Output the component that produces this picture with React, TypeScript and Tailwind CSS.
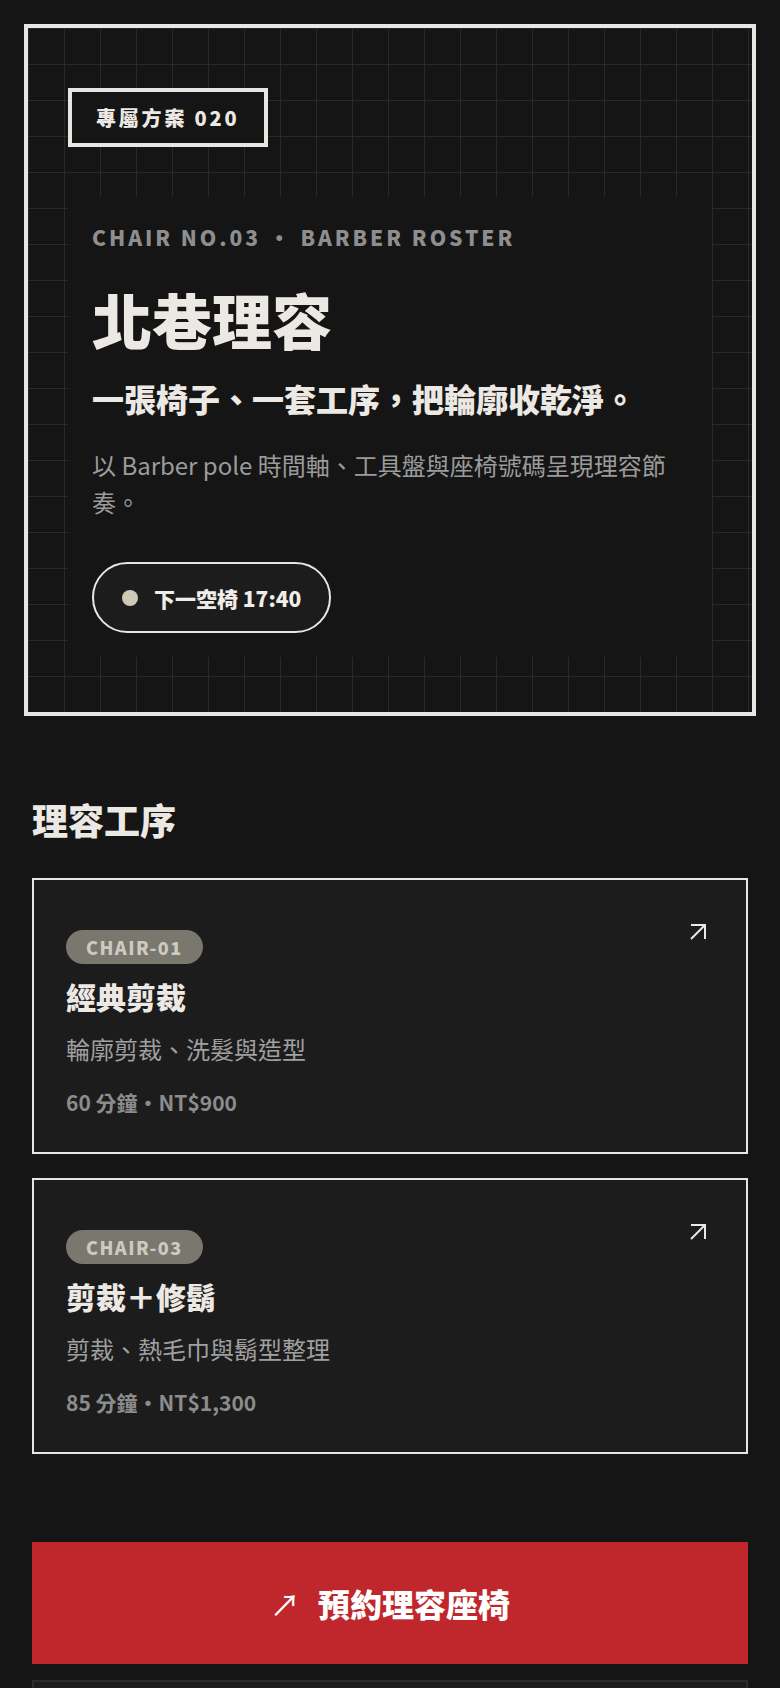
function ArrowUpRight({ className }: { className?: string }) {
  return (
    <svg
      viewBox="0 0 18 18"
      width="18"
      height="18"
      fill="none"
      stroke="currentColor"
      strokeWidth="2"
      strokeLinecap="butt"
      className={className}
    >
      <path d="M2 2H16V16" />
      <path d="M2 16L15.5 2.5" />
    </svg>
  );
}

export default function App() {
  const services = [
    {
      chair: "CHAIR-01",
      title: "經典剪裁",
      desc: "輪廓剪裁、洗髮與造型",
      meta: "60 分鐘・NT$900",
    },
    {
      chair: "CHAIR-03",
      title: "剪裁＋修鬍",
      desc: "剪裁、熱毛巾與鬍型整理",
      meta: "85 分鐘・NT$1,300",
    },
  ];

  return (
    <div className="min-h-screen bg-[#151515] px-6 pt-6 pb-10 font-['Noto_Sans_CJK_TC','Noto_Sans',sans-serif] text-[#ece9e4]">
      {/* Hero */}
      <section className="border-4 border-[#e8e6e1] bg-[#151515] px-10 pt-[60px] pb-[55px] [background-image:linear-gradient(to_right,#2a2a2a_1px,transparent_1px),linear-gradient(to_bottom,#2a2a2a_1px,transparent_1px)] [background-size:36px_36px]">
        <div className="w-fit border-4 border-[#e8e6e1] bg-[#151515] px-6 py-3 text-[20px] leading-[27px] font-black tracking-[0.14em] text-[#ece9e4]">
          專屬方案 020
        </div>

        <div className="mt-[49px] bg-[#151515] p-6">
          <p className="text-[21px] leading-[34px] font-black tracking-[0.14em] text-[#8e8e8e]">
            CHAIR NO.03 • BARBER ROSTER
          </p>
          <h1 className="mt-8 text-[60px] leading-[66px] font-black text-[#ece9e4]">
            北巷理容
          </h1>
          <p className="mt-6 text-[32px] leading-[44px] font-black text-[#ece9e4]">
            一張椅子、一套工序，把輪廓收乾淨。
          </p>
          <p className="mt-[26px] text-[24px] leading-[37px] text-[#9b9b9b]">
            以 Barber pole 時間軸、工具盤與座椅號碼呈現理容節奏。
          </p>
          <div className="mt-[42px] inline-flex h-[71px] items-center gap-4 rounded-full border-2 border-[#e8e6e1] bg-[#1c1c1c] px-7">
            <span className="h-4 w-4 rounded-full bg-[#cfc8b6]" />
            <span className="text-[21px] leading-[28px] font-black text-[#f0ede8]">
              下一空椅 17:40
            </span>
          </div>
        </div>
      </section>

      {/* Services */}
      <section className="mt-[79px] px-2">
        <h2 className="text-[36px] leading-[48px] font-black text-[#ece9e4]">理容工序</h2>

        <div className="mt-[35px] flex flex-col gap-6">
          {services.map((s) => (
            <article
              key={s.chair}
              className="flex h-[276px] items-start justify-between border-2 border-[#e8e6e1] bg-[#1c1c1c] pt-8 pl-8 pr-[39px]"
            >
              <div className="flex flex-col items-start pt-[18px]">
                <span className="inline-flex h-[34px] items-center rounded-full bg-[#7a776f] px-5 text-[18px] leading-[24px] font-black tracking-[0.08em] text-[#cdcac2]">
                  {s.chair}
                </span>
                <h3 className="mt-[13px] text-[30px] leading-[39px] font-black text-[#ece9e4]">
                  {s.title}
                </h3>
                <p className="mt-[15px] text-[24px] leading-[36px] text-[#a0a0a0]">{s.desc}</p>
                <p className="mt-5 text-[21px] leading-[31px] font-bold text-[#8c8c8c]">{s.meta}</p>
              </div>
              <ArrowUpRight className="mt-[11px] text-[#ece9e4]" />
            </article>
          ))}
        </div>
      </section>

      {/* CTA */}
      <div className="mx-2 mt-[88px] flex h-[122px] items-center justify-center gap-[18px] bg-[#c0272d] text-white">
        <span className="text-[30px] leading-[40px]">↗</span>
        <span className="text-[32px] leading-[44px] font-black">預約理容座椅</span>
      </div>

      <div className="mx-2 mt-4 h-[160px] border-2 border-[#2b2b2b] bg-[#1c1c1c]" />
    </div>
  );
}
